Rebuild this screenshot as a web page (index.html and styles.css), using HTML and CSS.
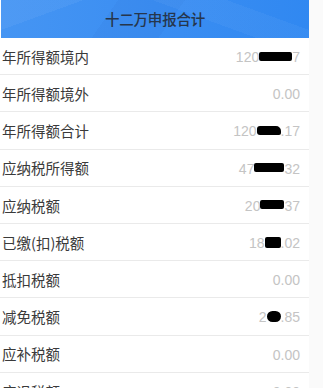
FILE: index.html
```html
<!DOCTYPE html>
<html lang="zh-CN">
<head>
<meta charset="utf-8">
<title>十二万申报合计</title>
<link rel="stylesheet" href="styles.css">
</head>
<body>
<div class="page">
  <header class="header"><h1 class="title">十二万申报合计</h1></header>
  <ul class="list">
    <li class="row"><span class="label">年所得额境内</span><span class="value">120<span class="redact r1"></span>7</span></li>
    <li class="row"><span class="label">年所得额境外</span><span class="value">0.00</span></li>
    <li class="row"><span class="label">年所得额合计</span><span class="value">120<span class="redact r2"></span>.17</span></li>
    <li class="row"><span class="label">应纳税所得额</span><span class="value">47<span class="redact r3"></span>32</span></li>
    <li class="row"><span class="label">应纳税额</span><span class="value">20<span class="redact r4"></span>37</span></li>
    <li class="row"><span class="label">已缴(扣)税额</span><span class="value">18<span class="redact r5"></span>.02</span></li>
    <li class="row"><span class="label">抵扣税额</span><span class="value">0.00</span></li>
    <li class="row"><span class="label">减免税额</span><span class="value">2<span class="redact r6"></span>.85</span></li>
    <li class="row"><span class="label">应补税额</span><span class="value">0.00</span></li>
    <li class="row"><span class="label">应退税额</span><span class="value">0.00</span></li>
  </ul>
</div>
</body>
</html>
```
FILE: styles.css
```css
html, body {
  margin: 0;
  padding: 0;
  background: #fafafa;
}
body {
  font-family: "Noto Sans CJK SC", "Noto Sans", sans-serif;
  overflow: hidden;
}
.page {
  width: 309px;
  background: #ffffff;
  min-height: 388px;
}
.header {
  margin-left: 1px;
  height: 38px;
  display: flex;
  align-items: center;
  justify-content: center;
  background:
    linear-gradient(160deg, rgba(255,255,255,0.05) 0%, rgba(255,255,255,0.05) 20%, transparent 20%),
    linear-gradient(20deg, transparent 62%, rgba(255,255,255,0.04) 62%, rgba(255,255,255,0.04) 80%, transparent 80%),
    linear-gradient(125deg, transparent 35%, rgba(0,40,140,0.04) 35%, rgba(0,40,140,0.04) 55%, transparent 55%),
    linear-gradient(90deg, #4595f3 0%, #3b8ef2 50%, #3088f1 100%);
}
.title {
  margin: 0;
  font-size: 14.5px;
  font-weight: 500;
  color: #26364c;
  letter-spacing: -0.2px;
  line-height: 1;
}
.list {
  list-style: none;
  margin: 0;
  padding: 0;
}
.row {
  box-sizing: border-box;
  height: 37.2px;
  padding: 2px 9px 0 2px;
  border-bottom: 1px solid #eaeaea;
  display: flex;
  align-items: center;
  justify-content: space-between;
}
.label {
  font-size: 14.5px;
  color: #3a3a3a;
  line-height: 1;
}
.value {
  font-family: "Liberation Sans", Arial, sans-serif;
  font-size: 14px;
  color: #c4c4c4;
  line-height: 1;
  display: flex;
  align-items: center;
}
.redact {
  display: inline-block;
  background: #000;
  border-radius: 2px;
  height: 9px;
  margin-top: -2px;
}
.r1 { width: 33px; }
.r2 { width: 24px; border-radius: 3px 5px 2px 3px; }
.r3 { width: 30px; }
.r4 { width: 24px; }
.r5 { width: 16px; height: 11px; }
.r6 { width: 14px; height: 11px; border-radius: 6px; }
```
